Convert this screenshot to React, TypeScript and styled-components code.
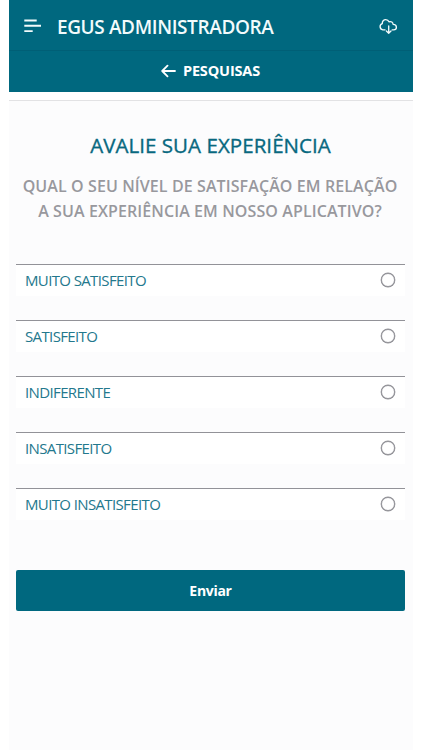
import React from 'react';
import styled, { createGlobalStyle } from 'styled-components';

const teal = '#00687f';

const GlobalStyle = createGlobalStyle`
  * { box-sizing: border-box; }
  body { margin: 0; background: #fff; font-family: 'Open Sans', 'Noto Sans', sans-serif; }
`;

const Screen = styled.div`
  width: 404px;
  height: 750px;
  margin-left: 9px;
  display: flex;
  flex-direction: column;
`;

const TopBar = styled.header`
  height: 51px;
  padding: 2px 15px 0 14px;
  display: flex;
  align-items: center;
  background: ${teal};
  color: #f2fbfc;
  border-bottom: 1px solid #005f76;
`;

const AppName = styled.h1`
  flex: 1;
  margin: 0 0 0 14px;
  padding-top: 1px;
  font-size: 19px;
  line-height: 26px;
  font-weight: 600;
  white-space: nowrap;
  letter-spacing: -0.39px;
`;

const SubBar = styled.nav`
  height: 41px;
  padding: 0 1px 1px 0;
  display: flex;
  align-items: center;
  justify-content: center;
  gap: 7px;
  background: ${teal};
  color: #fff;
`;

const SubTitle = styled.span`
  font-size: 14.5px;
  line-height: 20px;
  font-weight: 700;
  letter-spacing: -0.15px;
`;

const Content = styled.main`
  flex: 1;
  margin-top: 8px;
  padding: 30px 8px 0 7px;
  border-top: 1px solid #e2e2e4;
  background: #fcfcfd;
`;

const Heading = styled.h2`
  margin: 0;
  color: #08687f;
  text-align: center;
  font-size: 20.5px;
  line-height: 28px;
  font-weight: 400;
  -webkit-text-stroke: 0.35px currentColor;
  letter-spacing: 0.05px;
  white-space: nowrap;
`;

const Question = styled.p`
  margin: 15px -6px 0 -7px;
  color: #98989d;
  text-align: center;
  font-size: 16px;
  line-height: 25px;
  font-weight: 600;
  letter-spacing: 0.1px;
  white-space: nowrap;
`;

const Options = styled.div`
  margin-top: 40px;
  display: flex;
  flex-direction: column;
  gap: 24px;
`;

const Option = styled.label`
  height: 32px;
  padding: 0 10px 2px 9px;
  display: flex;
  align-items: center;
  justify-content: space-between;
  border-top: 1px solid #929298;
  background: #fff;
  color: #23788d;
  font-size: 15px;
  line-height: 20px;
  letter-spacing: -0.63px;
`;

const Radio = styled.input`
  appearance: none;
  width: 14px;
  height: 14px;
  margin: 0;
  border: 1.5px solid #929298;
  border-radius: 50%;
  background: #fff;
  box-shadow: 0 0 0 0.4px #929298;
  &:checked { border: 4px solid ${teal}; }
`;

const Submit = styled.button`
  width: 100%;
  height: 41px;
  margin-top: 50px;
  padding: 0;
  border: 0;
  border-radius: 2px;
  background: ${teal};
  color: #fff;
  font: 700 14px/20px 'Open Sans', 'Noto Sans', sans-serif;
  letter-spacing: -0.3px;
`;

const options = [
  'MUITO SATISFEITO',
  'SATISFEITO',
  'INDIFERENTE',
  'INSATISFEITO',
  'MUITO INSATISFEITO',
];

const MenuIcon = () => (
  <svg width="20" height="16" viewBox="0 0 20 16" stroke="currentColor" strokeWidth="1.9" fill="none">
    <path d="M1.3 2.5h12.4M1.3 7.8h16.7M1.3 13.1h8.4" />
  </svg>
);

const CloudIcon = () => (
  <svg width="20" height="18" viewBox="0 0 20 18" stroke="currentColor" strokeWidth="1.35" fill="none" strokeLinecap="round" strokeLinejoin="round">
    <path d="M7 12.8H4.8A3.2 3.2 0 0 1 4.3 6.6C4.1 4.3 5.7 2.6 7.7 2.6c1.6 0 2.7.8 3.3 2.2 2.2-.7 4 .5 4.1 2.5 2.2.1 3.3 1.4 3.3 2.9 0 1.7-1.2 2.6-2.8 2.6h-1.4M10.7 9v7.2M8.4 14l2.3 2.3L13 14" />
  </svg>
);

const BackIcon = () => (
  <svg width="15" height="14" viewBox="0 0 15 14" stroke="currentColor" strokeWidth="1.8" fill="none" strokeLinecap="round" strokeLinejoin="round">
    <path d="M14 7H1.3M6.5 1.7L1.2 7l5.3 5.3" />
  </svg>
);

export default function App() {
  return (
    <>
      <GlobalStyle />
      <Screen>
        <TopBar>
          <MenuIcon />
          <AppName>EGUS ADMINISTRADORA</AppName>
          <CloudIcon />
        </TopBar>
        <SubBar>
          <BackIcon />
          <SubTitle>PESQUISAS</SubTitle>
        </SubBar>
        <Content>
          <Heading>AVALIE SUA EXPERIÊNCIA</Heading>
          <Question>
            QUAL O SEU NÍVEL DE SATISFAÇÃO EM RELAÇÃO
            <br />A SUA EXPERIÊNCIA EM NOSSO APLICATIVO?
          </Question>
          <Options>
            {options.map((label) => (
              <Option key={label}>
                <span>{label}</span>
                <Radio type="radio" name="satisfacao" />
              </Option>
            ))}
          </Options>
          <Submit type="button">Enviar</Submit>
        </Content>
      </Screen>
    </>
  );
}
